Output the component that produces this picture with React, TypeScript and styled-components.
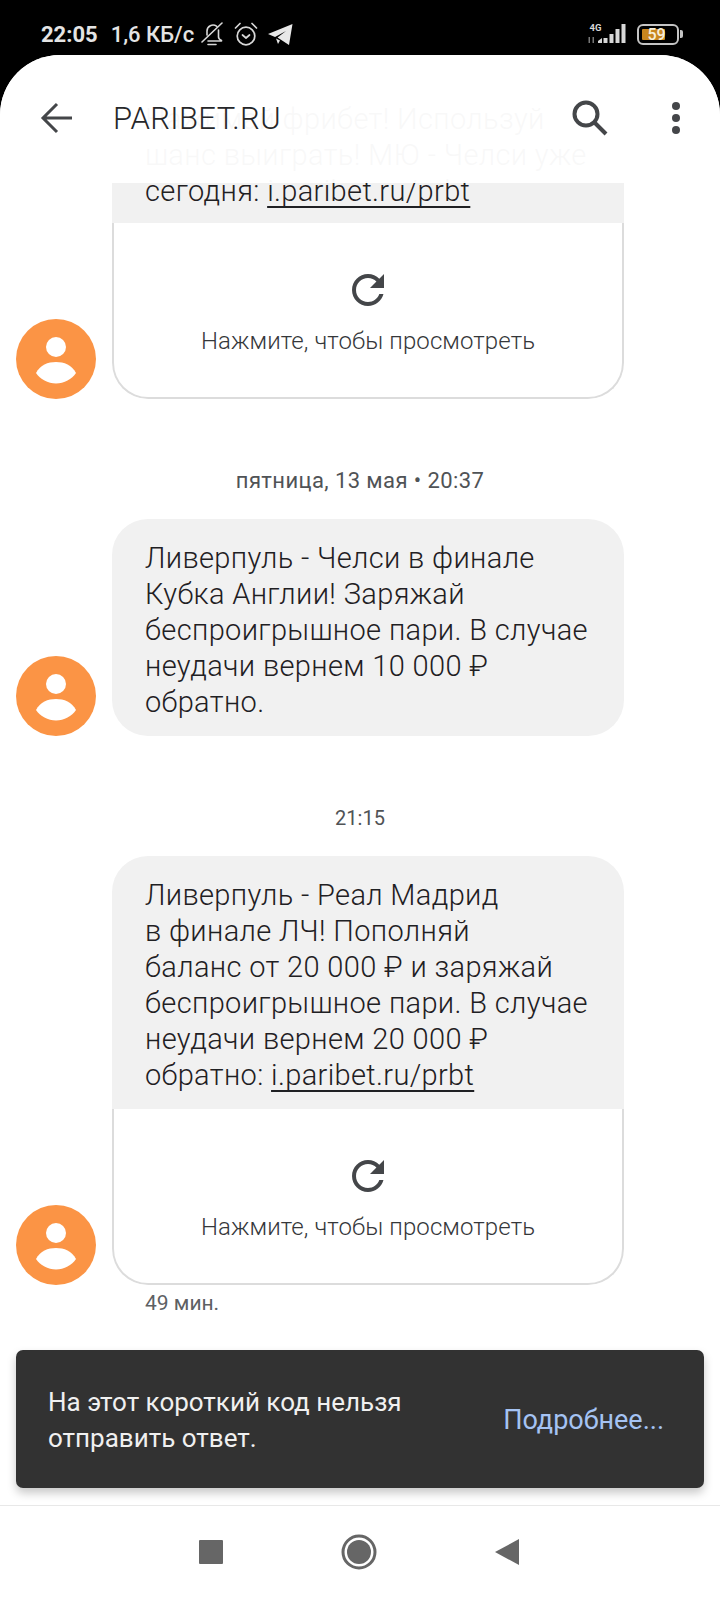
import React from 'react'
import styled, { createGlobalStyle } from 'styled-components'

const Global = createGlobalStyle`
  html, body { margin: 0; padding: 0; background: #000; }
  * { box-sizing: border-box; }
`

const Page = styled.div`
  width: 720px;
  height: 1600px;
  background: #000;
  display: flex;
  flex-direction: column;
  overflow: hidden;
  font-family: Roboto, "Noto Sans", sans-serif;
`

const StatusBar = styled.div`
  height: 55px;
  flex: none;
  display: flex;
  align-items: center;
  padding: 13px 37px 0 41px;
  color: #e4e4e4;
  font-weight: 500;
`

const Clock = styled.span`
  font-size: 22px;
  font-weight: 700;
  margin-right: 13px;
`

const Speed = styled.span`
  font-size: 22px;
  margin-right: 7px;
`

const StatusIcons = styled.div`
  display: flex;
  align-items: center;
  gap: 10px;
`

const Spacer = styled.div`
  flex: 1;
`

const SignalIcon = styled.svg`
  margin-top: -6px;
`

const BatteryBox = styled.div`
  position: relative;
  width: 42px;
  height: 21px;
  border: 2px solid #c4c4c4;
  border-radius: 6px;
  padding: 3px;
  margin-left: 11px;
`

const BatteryFill = styled.div`
  height: 100%;
  background: #c9861f;
  border-radius: 1px;
`

const BatteryLabel = styled.span`
  position: absolute;
  inset: 0;
  display: flex;
  align-items: center;
  justify-content: center;
  padding-right: 3px;
  font-size: 16px;
  color: #f6efdc;
`

const BatteryCap = styled.div`
  width: 3px;
  height: 8px;
  background: #c4c4c4;
  margin-left: 1px;
  border-radius: 0 2px 2px 0;
`

const Screen = styled.div`
  position: relative;
  flex: 1;
  background: #fff;
  border-radius: 60px 60px 0 0;
  overflow: hidden;
  display: flex;
  flex-direction: column;
`

const TopBar = styled.div`
  position: absolute;
  top: 0;
  left: 0;
  right: 0;
  height: 128px;
  background: rgba(255, 255, 255, 0.97);
  display: flex;
  align-items: center;
  padding: 0 40px 2px 40px;
  z-index: 2;
`

const Title = styled.div`
  margin-left: 41px;
  flex: 1;
  font-size: 31px;
  font-weight: 300;
  letter-spacing: 0.4px;
  color: #26272a;
`

const MoreDots = styled.div`
  display: flex;
  flex-direction: column;
  gap: 4px;
  margin-left: 64px;
`

const Dot = styled.span`
  width: 8px;
  height: 8px;
  border-radius: 50%;
  background: #444649;
`

const Feed = styled.div`
  flex: 1;
  min-height: 0;
  overflow: hidden;
  padding: 23px 0 0 16px;
`

const Row = styled.div`
  display: flex;
  align-items: flex-end;
  gap: 16px;
`

const Avatar = styled.div`
  width: 80px;
  height: 80px;
  flex: none;
`

const Bubble = styled.div`
  width: 512px;
  border-radius: 36px;
  overflow: hidden;
  background: #f1f1f1;
`

const BubbleText = styled.div<{ $top?: number; $bottom?: number }>`
  padding: ${p => p.$top ?? 21}px 20px ${p => p.$bottom ?? 16}px 33px;
  font-size: 29px;
  font-weight: 300;
  letter-spacing: 0.35px;
  line-height: 36px;
  color: #1f2023;
  white-space: pre-line;
`

const LinkText = styled.span`
  text-decoration: underline;
  text-decoration-thickness: 2px;
  text-decoration-skip-ink: none;
  text-underline-offset: 5px;
`

const Preview = styled.div`
  height: 176px;
  background: #fff;
  border: 2px solid #dcdcdc;
  border-top: 0;
  border-radius: 0 0 36px 36px;
  display: flex;
  flex-direction: column;
  align-items: center;
  padding-top: 43px;
  color: #444649;
`

const PreviewLabel = styled.div`
  margin-top: 13px;
  font-size: 24px;
  font-weight: 300;
  letter-spacing: 0.1px;
  line-height: 28px;
  color: #35373a;
`

const Stamp = styled.div<{ $top: number; $bottom: number; $size: number; $spacing: number }>`
  text-align: center;
  margin: ${p => p.$top}px 0 ${p => p.$bottom}px -16px;
  font-size: ${p => p.$size}px;
  letter-spacing: ${p => p.$spacing}px;
  line-height: 24px;
  color: #505356;
`

const Ago = styled.div`
  margin: 6px 0 0 129px;
  font-size: 21px;
  line-height: 25px;
  color: #5d6063;
`

const Toast = styled.div`
  position: absolute;
  left: 16px;
  right: 16px;
  top: 1295px;
  height: 138px;
  background: #323232;
  border-radius: 7px;
  box-shadow: 0 5px 10px rgba(0, 0, 0, 0.22);
  display: flex;
  align-items: center;
  justify-content: space-between;
  padding: 2px 40px 0 32px;
  font-size: 26px;
  line-height: 36px;
  color: #f0f0f0;
  z-index: 3;
`

const ToastAction = styled.div`
  color: #a5c3f3;
  font-size: 27px;
`

const NavBar = styled.div`
  position: absolute;
  left: 0;
  right: 0;
  bottom: 0;
  height: 95px;
  background: #fff;
  border-top: 1px solid #e8e8e8;
  display: flex;
  align-items: center;
  justify-content: center;
  gap: 117px;
  padding: 0 3px 2px 0;
`

const PersonAvatar = () => (
  <Avatar>
    <svg width="80" height="80" viewBox="0 0 80 80">
      <circle cx="40" cy="40" r="40" fill="#fb9445" />
      <circle cx="40" cy="28" r="10" fill="#fff" />
      <path d="M20 54C24 46 32 43 40 43S56 46 60 54C56 60 48 64.500 40 64.500S24 60 20 54z" fill="#fff" />
    </svg>
  </Avatar>
)

const Refresh = () => (
  <svg width="48" height="48" viewBox="0 0 24 24" fill="#444649">
    <path d="M17.650 6.350C16.200 4.900 14.210 4 12 4c-4.420 0-7.990 3.580-7.990 8s3.570 8 7.990 8c3.730 0 6.840-2.550 7.730-6h-2.080c-.820 2.330-3.040 4-5.650 4-3.310 0-6-2.690-6-6s2.690-6 6-6c1.660 0 3.140.690 4.220 1.780L13 11h7V4l-2.350 2.350z" />
  </svg>
)

const Tap = () => (
  <Preview>
    <Refresh />
    <PreviewLabel>Нажмите, чтобы просмотреть</PreviewLabel>
  </Preview>
)

export default function App() {
  return (
    <Page>
      <Global />
      <StatusBar>
        <Clock>22:05</Clock>
        <Speed>1,6 КБ/с</Speed>
        <StatusIcons>
          <svg width="23" height="24" viewBox="0 0 23 24" fill="none" stroke="#d8d8d8" strokeWidth="1.600" strokeLinejoin="round" strokeLinecap="round">
            <path d="M6 13V9a6 6 0 0 1 9.500-4.800M17.500 8v7c0 1.500 1.500 2.800 3 3.500v.5H7M7 22.500h8M1 20 21 1" />
          </svg>
          <svg width="24" height="24" viewBox="0 0 24 24" fill="none" stroke="#d8d8d8" strokeWidth="1.700" strokeLinecap="round" strokeLinejoin="round">
            <circle cx="12" cy="14" r="8.800" />
            <path d="M8.500 13l3.500 3 3.500-3M1.500 6l4.500-4.500M22.500 6 18 1.500" />
          </svg>
          <svg width="25" height="23" viewBox="0 0 25 23" fill="#e8e8e8">
            <path d="M0 11 24.500 1 21 22 9.500 14.500 18 8 7 14z" />
            <path d="M8 15.500 10 21l2-3.500z" />
          </svg>
        </StatusIcons>
        <Spacer />
        <SignalIcon width="38" height="26" viewBox="0 -6 38 26" fill="#d8d8d8">
          <text x="1.500" y="7" fontSize="9.500" fontWeight="700" fontFamily="Roboto, sans-serif">4G</text>
          <rect x="0.500" y="13" width="1.500" height="6" fill="#777" />
          <rect x="4.500" y="13" width="1.500" height="6" fill="#777" />
          <path d="M10 19v-2l4-3v5z" />
          <rect x="15.500" y="14" width="4" height="5" />
          <rect x="21.500" y="10" width="4" height="9" />
          <rect x="27.500" y="5" width="4" height="14" />
          <rect x="33.500" y="0" width="4" height="19" />
        </SignalIcon>
        <BatteryBox>
          <BatteryFill style={{ width: '71%' }} />
          <BatteryLabel>59</BatteryLabel>
        </BatteryBox>
        <BatteryCap />
      </StatusBar>
      <Screen>
        <TopBar>
          <svg width="32" height="32" viewBox="0 0 32 32" fill="none" stroke="#444649" strokeWidth="3">
            <path d="M32 16H3M17 2 3 16l14 14" />
          </svg>
          <Title>PARIBET.RU</Title>
          <svg width="36" height="36" viewBox="0 0 36 36" fill="none" stroke="#444649" strokeWidth="4">
            <circle cx="14" cy="14" r="11.500" />
            <path d="M22 22l12 12" />
          </svg>
          <MoreDots>
            <Dot />
            <Dot />
            <Dot />
          </MoreDots>
        </TopBar>
        <Feed>
          <Row>
            <PersonAvatar />
            <Bubble>
              <BubbleText $top={23} $bottom={14}>
                {'Нажимай фрибет! Используй\nшанс выиграть! МЮ - Челси уже\nсегодня: '}
                <LinkText>i.paribet.ru/prbt</LinkText>
              </BubbleText>
              <Tap />
            </Bubble>
          </Row>
          <Stamp $top={70} $bottom={26} $size={22} $spacing={0.4}>пятница, 13 мая • 20:37</Stamp>
          <Row>
            <PersonAvatar />
            <Bubble>
              <BubbleText>
                {'Ливерпуль - Челси в финале\nКубка Англии! Заряжай\nбеспроигрышное пари. В случае\nнеудачи вернем 10 000 ₽\nобратно.'}
              </BubbleText>
            </Bubble>
          </Row>
          <Stamp $top={70} $bottom={26} $size={20} $spacing={0}>21:15</Stamp>
          <Row>
            <PersonAvatar />
            <Bubble>
              <BubbleText>
                {'Ливерпуль - Реал Мадрид\nв финале ЛЧ! Пополняй\nбаланс от 20 000 ₽ и заряжай\nбеспроигрышное пари. В случае\nнеудачи вернем 20 000 ₽\nобратно: '}
                <LinkText>i.paribet.ru/prbt</LinkText>
              </BubbleText>
              <Tap />
            </Bubble>
          </Row>
          <Ago>49 мин.</Ago>
        </Feed>
        <Toast>
          <div>На этот короткий код нельзя<br />отправить ответ.</div>
          <ToastAction>Подробнее...</ToastAction>
        </Toast>
        <NavBar>
          <svg width="26" height="26" viewBox="0 0 26 26"><rect x="1" y="1" width="24" height="24" rx="1" fill="#666" /></svg>
          <svg width="36" height="36" viewBox="0 0 36 36"><circle cx="18" cy="18" r="16" fill="none" stroke="#666" strokeWidth="3" /><circle cx="18" cy="18" r="12" fill="#666" /></svg>
          <svg width="26" height="28" viewBox="0 0 26 28"><path d="M1 14 25 1v26z" fill="#666" /></svg>
        </NavBar>
      </Screen>
    </Page>
  )
}
